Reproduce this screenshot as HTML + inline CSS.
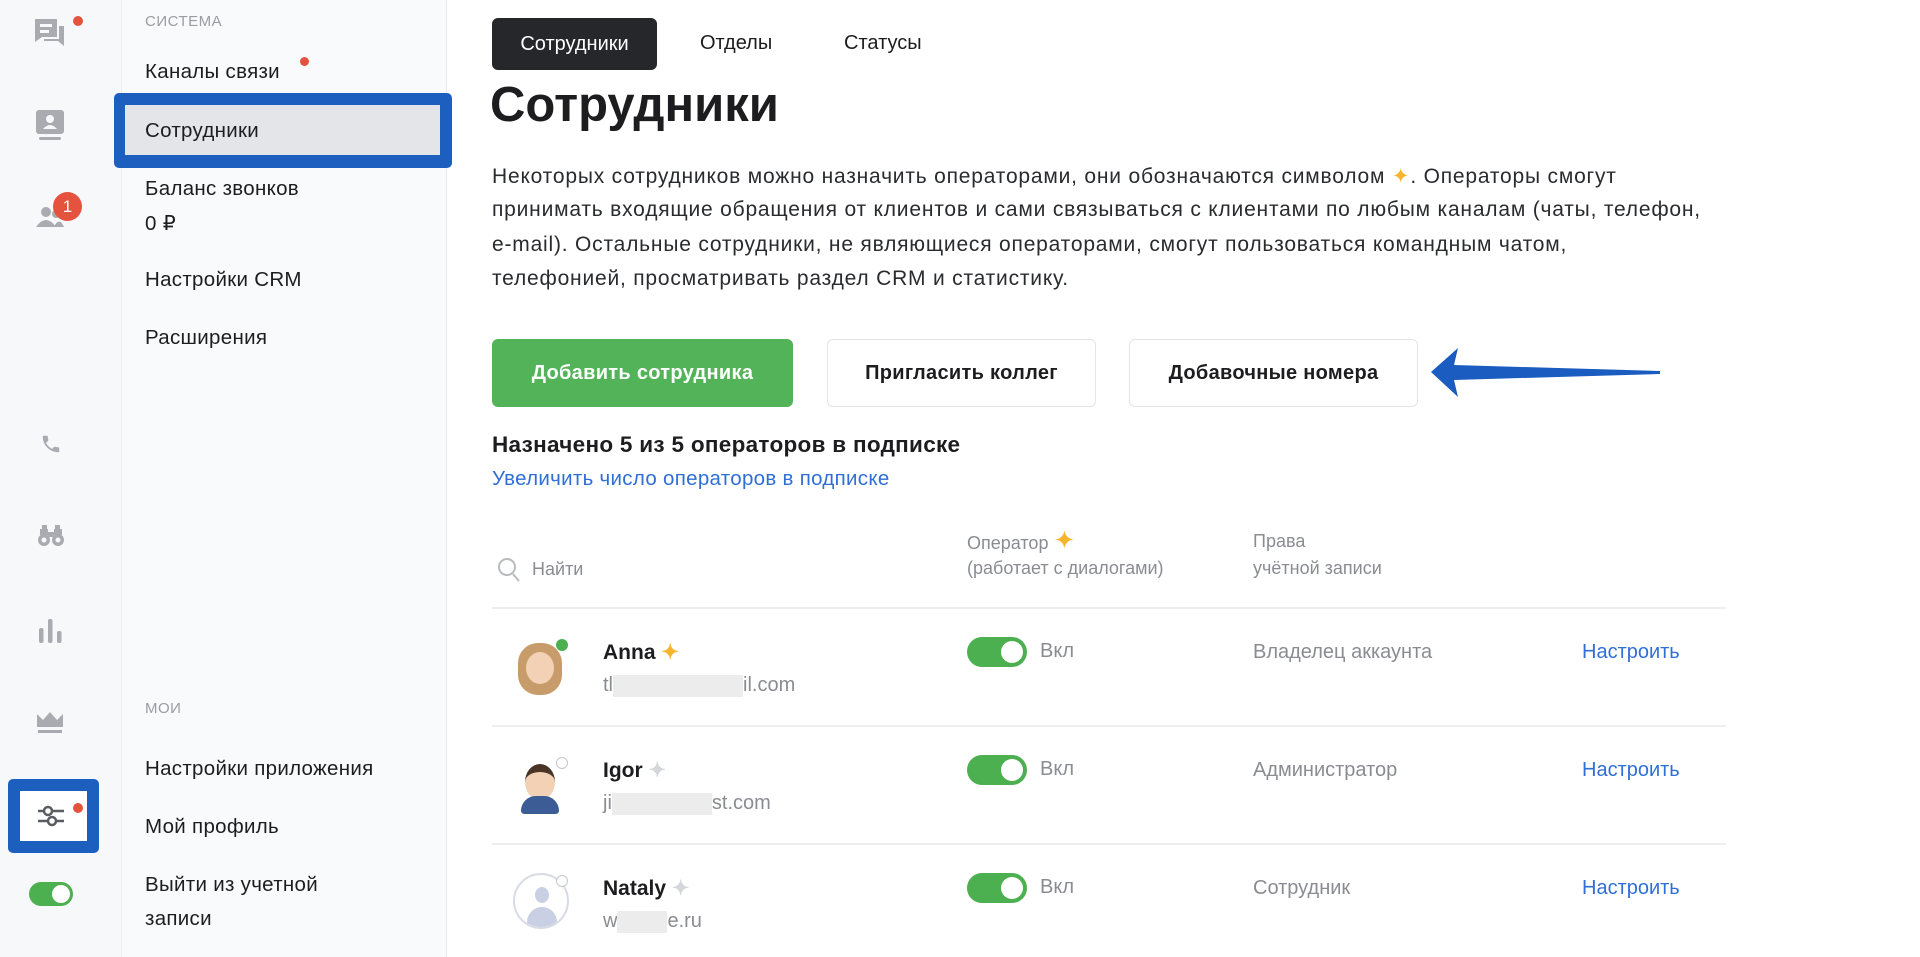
<!DOCTYPE html>
<html><head><meta charset="utf-8"><style>
*{box-sizing:border-box;margin:0;padding:0}
body{width:1920px;height:957px;overflow:hidden;background:#fff;font-family:"Liberation Sans",sans-serif;color:#1d1d1f;position:relative}
.abs{position:absolute}
.col1{left:0;top:0;width:122px;height:957px;background:#f7f8fa;border-right:1px solid #eceef1}
.col2{left:122px;top:0;width:325px;height:957px;background:#f9fafc;border-right:1px solid #e8eaee}
.mi{position:absolute;left:145px;font-size:20.5px;letter-spacing:.3px;color:#1d1d1f;white-space:nowrap}
.cap{position:absolute;left:145px;font-size:15px;color:#9a9ca2;letter-spacing:.5px}
.ic{position:absolute;fill:#a9abb0}
.dot{position:absolute;width:10px;height:10px;border-radius:50%;background:#e5533f}
.btn{position:absolute;top:339px;height:68px;border-radius:6px;font-size:20px;font-weight:bold;display:flex;align-items:center;justify-content:center;letter-spacing:.3px}
.wb{border:1px solid #e2e4e8;background:#fff;color:#1d1d1f}
.gray{color:#8a8c92}
.tg{position:absolute;width:60px;height:30px;border-radius:15px;background:#4cb050}
.tg::after{content:"";position:absolute;right:4px;top:4px;width:22px;height:22px;border-radius:50%;background:#fff}
.hr{position:absolute;left:492px;width:1234px;height:2px;background:#eceef0}
.blue{color:#2f6fd6}
.pl{position:absolute;left:492px;font-size:21px;letter-spacing:.8px;color:#2a2b2e;white-space:nowrap}
</style></head><body>
<div class="abs col1"></div>
<div class="abs col2"></div>

<svg class="ic" style="left:33px;top:17px" width="34" height="34" viewBox="0 0 34 34"><path d="M2 2h22v18H9l-7 5z"/><path d="M26 9h5v20l-6-5H11v-2h15z"/><rect x="7" y="7" width="12" height="3" fill="#f7f8fa"/><rect x="7" y="13" width="9" height="3" fill="#f7f8fa"/></svg>
<div class="dot" style="left:73px;top:16px"></div>
<svg class="ic" style="left:36px;top:110px" width="30" height="34" viewBox="0 0 30 34"><rect x="0" y="0" width="28" height="24" rx="3"/><circle cx="14" cy="9" r="4" fill="#f7f8fa"/><path d="M7 19q7-8 14 0z" fill="#f7f8fa"/><rect x="3" y="27" width="22" height="3" rx="1.5"/></svg>
<svg class="ic" style="left:36px;top:205px" width="28" height="24" viewBox="0 0 28 24"><circle cx="10" cy="7" r="5"/><path d="M0 22q10-14 20 0z"/><circle cx="20" cy="9" r="4"/><path d="M18 22q5-11 10 0z"/></svg>
<div class="abs" style="left:53px;top:192px;width:29px;height:29px;border-radius:50%;background:#e5533f;color:#fff;font-size:17px;text-align:center;line-height:29px">1</div>
<svg class="ic" style="left:40px;top:433px" width="22" height="22" viewBox="0 0 24 24"><path d="M6.6 10.8c1.4 2.8 3.8 5.1 6.6 6.6l2.2-2.2c.3-.3.7-.4 1-.2 1.1.4 2.300.6 3.6.6.6 0 1 .4 1 1V20c0 .6-.4 1-1 1C10.6 21 3 13.4 3 4c0-.6.4-1 1-1h3.5c.6 0 1 .4 1 1 0 1.3.2 2.5.6 3.6.1.3 0 .7-.2 1z"/></svg>
<svg class="ic" style="left:37px;top:525px" width="28" height="22" viewBox="0 0 28 22"><path d="M3 4h8v6H3zM17 4h8v6h-8zM5 0h5v4H5zM18 0h5v4h-5zM11 7h6v5h-6z"/><circle cx="7" cy="15" r="6"/><circle cx="21" cy="15" r="6"/><circle cx="7" cy="15" r="2.5" fill="#f7f8fa"/><circle cx="21" cy="15" r="2.5" fill="#f7f8fa"/></svg>
<svg class="ic" style="left:39px;top:619px" width="24" height="24" viewBox="0 0 24 24"><rect x="0" y="9" width="4.5" height="15" rx="2"/><rect x="9" y="0" width="4.5" height="24" rx="2"/><rect x="18" y="12" width="4.5" height="12" rx="2"/></svg>
<svg class="ic" style="left:37px;top:712px" width="26" height="22" viewBox="0 0 26 22"><path d="M0 2l6 6 7-8 7 8 6-6v13H0z"/><rect x="1" y="18" width="24" height="3"/></svg>
<div class="abs" style="left:8px;top:779px;width:91px;height:74px;background:#1d5fbf;border-radius:5px"></div>
<div class="abs" style="left:20px;top:791px;width:67px;height:50px;background:#fff"></div>
<svg class="abs" style="left:37px;top:805px" width="28" height="22" viewBox="0 0 28 22" stroke="#5a5c62" stroke-width="2.5" fill="#fff"><line x1="1" y1="6" x2="27" y2="6"/><line x1="1" y1="16" x2="27" y2="16"/><circle cx="11" cy="6" r="4"/><circle cx="15" cy="16" r="4"/></svg>
<div class="dot" style="left:73px;top:803px"></div>
<div class="abs" style="left:29px;top:882px;width:44px;height:24px;border-radius:12px;background:#4cb050"></div>
<div class="abs" style="left:52px;top:885px;width:18px;height:18px;border-radius:50%;background:#fff"></div>

<div class="cap" style="top:13px">СИСТЕМА</div>
<div class="mi" style="top:60px">Каналы связи</div>
<div class="dot" style="left:300px;top:57px;width:9px;height:9px"></div>
<div class="abs" style="left:114px;top:93px;width:338px;height:75px;background:#1d5fbf;border-radius:5px"></div>
<div class="abs" style="left:125px;top:105px;width:315px;height:50px;background:#e3e5e9"></div>
<div class="mi" style="top:119px">Сотрудники</div>
<div class="mi" style="top:177px">Баланс звонков</div>
<div class="mi" style="top:211px">0 ₽</div>
<div class="mi" style="top:268px">Настройки CRM</div>
<div class="mi" style="top:326px">Расширения</div>
<div class="cap" style="top:700px">МОИ</div>
<div class="mi" style="top:757px">Настройки приложения</div>
<div class="mi" style="top:815px">Мой профиль</div>
<div class="mi" style="top:873px">Выйти из учетной</div>
<div class="mi" style="top:907px">записи</div>

<div class="abs" style="left:492px;top:18px;width:165px;height:52px;background:#25272b;border-radius:6px;color:#fff;font-size:20px;text-align:center;line-height:52px">Сотрудники</div>
<div class="abs" style="left:700px;top:32px;font-size:20px">Отделы</div>
<div class="abs" style="left:844px;top:32px;font-size:20px">Статусы</div>
<div class="abs" style="left:490px;top:77px;font-size:49px;font-weight:bold">Сотрудники</div>
<div class="pl" style="top:164px">Некоторых сотрудников можно назначить операторами, они обозначаются символом <span style="color:#f5b52c">✦</span>. Операторы смогут</div>
<div class="pl" style="top:198px">принимать входящие обращения от клиентов и сами связываться с клиентами по любым каналам (чаты, телефон,</div>
<div class="pl" style="top:233px">e-mail). Остальные сотрудники, не являющиеся операторами, смогут пользоваться командным чатом,</div>
<div class="pl" style="top:267px">телефонией, просматривать раздел CRM и статистику.</div>

<div class="btn" style="left:492px;width:301px;background:#52b358;color:#fff">Добавить сотрудника</div>
<div class="btn wb" style="left:827px;width:269px">Пригласить коллег</div>
<div class="btn wb" style="left:1129px;width:289px">Добавочные номера</div>
<svg class="abs" style="left:1428px;top:345px" width="236" height="54" viewBox="0 0 236 54"><path d="M3 27L30 3l-4 17 206 6v3L26 35l4 17z" fill="#1a5cc0"/></svg>

<div class="abs" style="left:492px;top:432px;font-size:22.5px;font-weight:bold;letter-spacing:.3px">Назначено 5 из 5 операторов в подписке</div>
<div class="abs blue" style="left:492px;top:467px;font-size:20.5px;letter-spacing:.3px">Увеличить число операторов в подписке</div>

<svg class="abs" style="left:497px;top:557px" width="24" height="26" viewBox="0 0 24 26" stroke="#b8bac0" stroke-width="2" fill="none"><circle cx="10" cy="10" r="8"/><line x1="16" y1="17" x2="22" y2="24"/></svg>
<div class="abs gray" style="left:532px;top:559px;font-size:18px">Найти</div>
<div class="abs gray" style="left:967px;top:525px;font-size:18px">Оператор <span style="color:#f5b52c;font-size:26px">✦</span></div>
<div class="abs gray" style="left:967px;top:558px;font-size:18px">(работает с диалогами)</div>
<div class="abs gray" style="left:1253px;top:531px;font-size:18px">Права</div>
<div class="abs gray" style="left:1253px;top:558px;font-size:18px">учётной записи</div>
<div class="hr" style="top:607px"></div>

<div class="abs" style="left:518px;top:643px;width:44px;height:52px;border-radius:20px;background:#c89c6a"></div>
<div class="abs" style="left:526px;top:652px;width:28px;height:32px;border-radius:50%;background:#f2d1b4"></div>
<div class="abs" style="left:556px;top:639px;width:12px;height:12px;border-radius:50%;background:#4cb050"></div>
<div class="abs" style="left:603px;top:640px;font-size:21px;font-weight:bold">Anna <span style="color:#f5b52c">✦</span></div>
<div class="abs gray" style="left:603px;top:674px;font-size:20px">tl<span style="display:inline-block;width:130px;height:22px;background:#ececec;vertical-align:middle"></span>il.com</div>
<div class="tg" style="left:967px;top:637px"></div>
<div class="abs gray" style="left:1040px;top:640px;font-size:20px">Вкл</div>
<div class="abs gray" style="left:1253px;top:641px;font-size:20px">Владелец аккаунта</div>
<div class="abs blue" style="left:1582px;top:641px;font-size:20px">Настроить</div>
<div class="hr" style="top:725px"></div>

<div class="abs" style="left:516px;top:758px;width:50px;height:56px;border-radius:50%;background:#fff"></div>
<div class="abs" style="left:525px;top:764px;width:30px;height:36px;border-radius:50%;background:#f2d1b4;border-top:8px solid #4a3426"></div>
<div class="abs" style="left:521px;top:796px;width:38px;height:18px;border-radius:18px 18px 4px 4px;background:#3c5c96"></div>
<div class="abs" style="left:556px;top:757px;width:12px;height:12px;border-radius:50%;border:1.5px solid #c5c7cc;background:#fff"></div>
<div class="abs" style="left:603px;top:758px;font-size:21px;font-weight:bold">Igor <span style="color:#d4d6da">✦</span></div>
<div class="abs gray" style="left:603px;top:792px;font-size:20px">ji<span style="display:inline-block;width:100px;height:22px;background:#ececec;vertical-align:middle"></span>st.com</div>
<div class="tg" style="left:967px;top:755px"></div>
<div class="abs gray" style="left:1040px;top:758px;font-size:20px">Вкл</div>
<div class="abs gray" style="left:1253px;top:759px;font-size:20px">Администратор</div>
<div class="abs blue" style="left:1582px;top:759px;font-size:20px">Настроить</div>
<div class="hr" style="top:843px"></div>

<div class="abs" style="left:513px;top:873px;width:56px;height:56px;border-radius:50%;border:2px solid #d7dbe5;background:#fff;overflow:hidden"><div style="position:absolute;left:20px;top:12px;width:14px;height:16px;border-radius:50%;background:#c9d0e3"></div><div style="position:absolute;left:12px;top:32px;width:30px;height:24px;border-radius:15px 15px 0 0;background:#c9d0e3"></div></div>
<div class="abs" style="left:556px;top:875px;width:12px;height:12px;border-radius:50%;border:1.5px solid #c5c7cc;background:#fff"></div>
<div class="abs" style="left:603px;top:876px;font-size:21px;font-weight:bold">Nataly <span style="color:#d4d6da">✦</span></div>
<div class="abs gray" style="left:603px;top:910px;font-size:20px">w<span style="display:inline-block;width:50px;height:22px;background:#ececec;vertical-align:middle"></span>e.ru</div>
<div class="tg" style="left:967px;top:873px"></div>
<div class="abs gray" style="left:1040px;top:876px;font-size:20px">Вкл</div>
<div class="abs gray" style="left:1253px;top:877px;font-size:20px">Сотрудник</div>
<div class="abs blue" style="left:1582px;top:877px;font-size:20px">Настроить</div>
</body></html>
